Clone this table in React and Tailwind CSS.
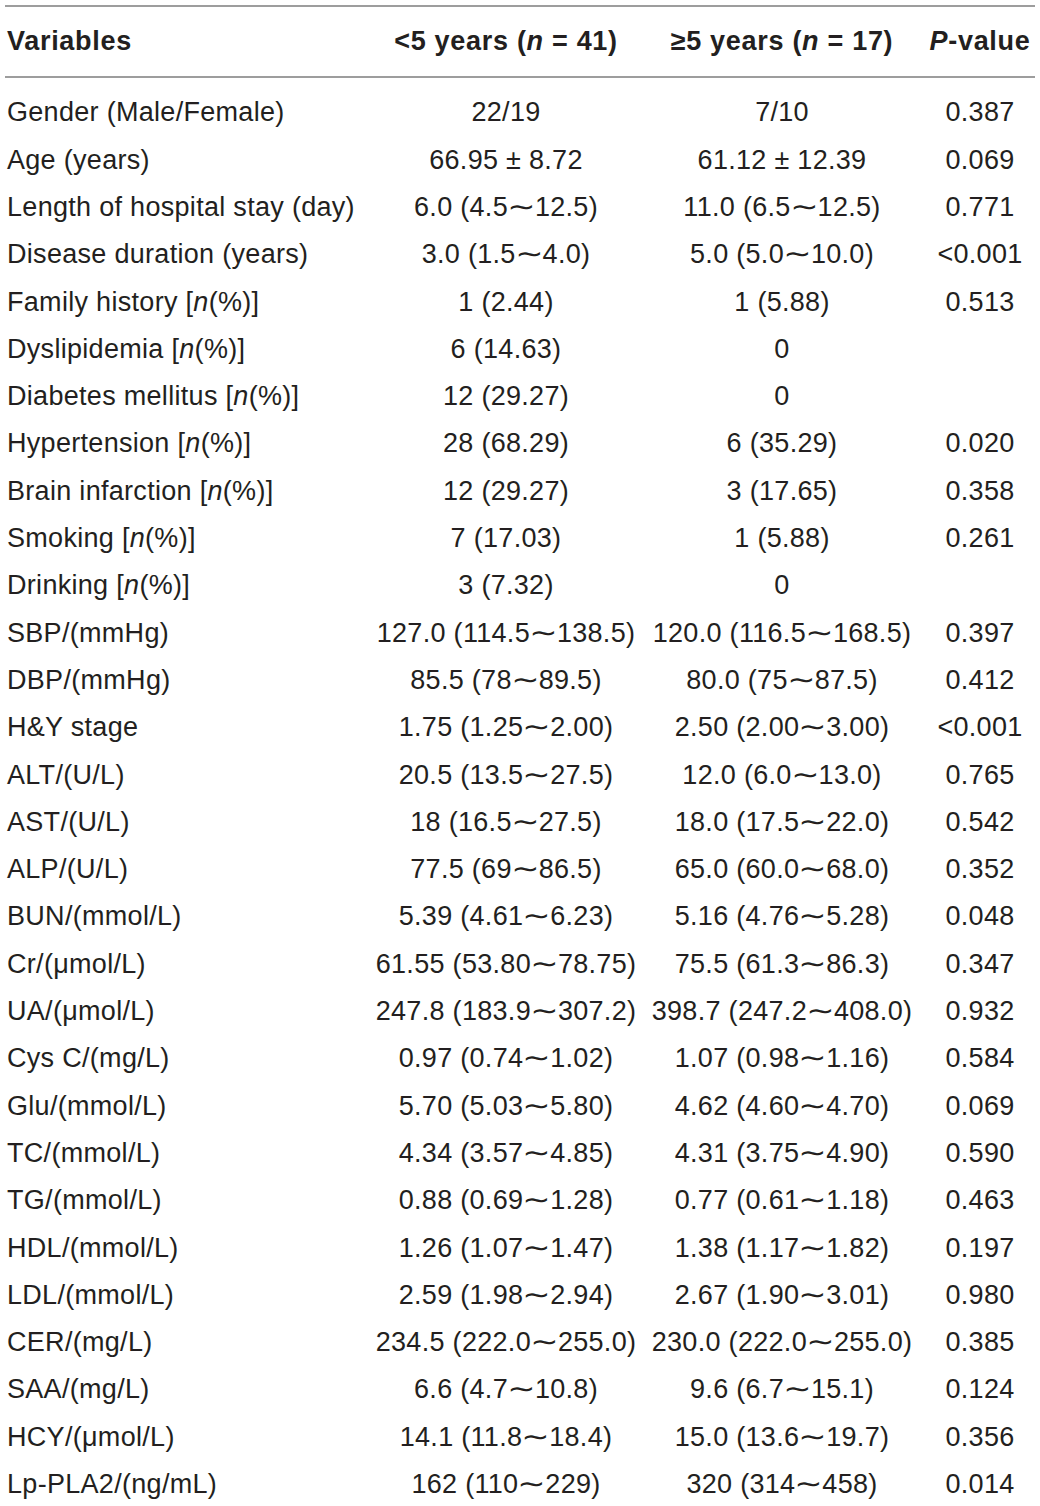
import React from "react";

const N = () => <i>n</i>;

const rows = [
  ["Gender (Male/Female)", "22/19", "7/10", "0.387"],
  ["Age (years)", "66.95 ± 8.72", "61.12 ± 12.39", "0.069"],
  ["Length of hospital stay (day)", "6.0 (4.5∼12.5)", "11.0 (6.5∼12.5)", "0.771"],
  ["Disease duration (years)", "3.0 (1.5∼4.0)", "5.0 (5.0∼10.0)", "<0.001"],
  [<>Family history [<N />(%)]</>, "1 (2.44)", "1 (5.88)", "0.513"],
  [<>Dyslipidemia [<N />(%)]</>, "6 (14.63)", "0", ""],
  [<>Diabetes mellitus [<N />(%)]</>, "12 (29.27)", "0", ""],
  [<>Hypertension [<N />(%)]</>, "28 (68.29)", "6 (35.29)", "0.020"],
  [<>Brain infarction [<N />(%)]</>, "12 (29.27)", "3 (17.65)", "0.358"],
  [<>Smoking [<N />(%)]</>, "7 (17.03)", "1 (5.88)", "0.261"],
  [<>Drinking [<N />(%)]</>, "3 (7.32)", "0", ""],
  ["SBP/(mmHg)", "127.0 (114.5∼138.5)", "120.0 (116.5∼168.5)", "0.397"],
  ["DBP/(mmHg)", "85.5 (78∼89.5)", "80.0 (75∼87.5)", "0.412"],
  ["H&Y stage", "1.75 (1.25∼2.00)", "2.50 (2.00∼3.00)", "<0.001"],
  ["ALT/(U/L)", "20.5 (13.5∼27.5)", "12.0 (6.0∼13.0)", "0.765"],
  ["AST/(U/L)", "18 (16.5∼27.5)", "18.0 (17.5∼22.0)", "0.542"],
  ["ALP/(U/L)", "77.5 (69∼86.5)", "65.0 (60.0∼68.0)", "0.352"],
  ["BUN/(mmol/L)", "5.39 (4.61∼6.23)", "5.16 (4.76∼5.28)", "0.048"],
  ["Cr/(μmol/L)", "61.55 (53.80∼78.75)", "75.5 (61.3∼86.3)", "0.347"],
  ["UA/(μmol/L)", "247.8 (183.9∼307.2)", "398.7 (247.2∼408.0)", "0.932"],
  ["Cys C/(mg/L)", "0.97 (0.74∼1.02)", "1.07 (0.98∼1.16)", "0.584"],
  ["Glu/(mmol/L)", "5.70 (5.03∼5.80)", "4.62 (4.60∼4.70)", "0.069"],
  ["TC/(mmol/L)", "4.34 (3.57∼4.85)", "4.31 (3.75∼4.90)", "0.590"],
  ["TG/(mmol/L)", "0.88 (0.69∼1.28)", "0.77 (0.61∼1.18)", "0.463"],
  ["HDL/(mmol/L)", "1.26 (1.07∼1.47)", "1.38 (1.17∼1.82)", "0.197"],
  ["LDL/(mmol/L)", "2.59 (1.98∼2.94)", "2.67 (1.90∼3.01)", "0.980"],
  ["CER/(mg/L)", "234.5 (222.0∼255.0)", "230.0 (222.0∼255.0)", "0.385"],
  ["SAA/(mg/L)", "6.6 (4.7∼10.8)", "9.6 (6.7∼15.1)", "0.124"],
  ["HCY/(μmol/L)", "14.1 (11.8∼18.4)", "15.0 (13.6∼19.7)", "0.356"],
  ["Lp-PLA2/(ng/mL)", "162 (110∼229)", "320 (314∼458)", "0.014"],
];

// wide tilde like the typeset original
const Val = ({ v }) => {
  const parts = v.split("∼");
  if (parts.length < 2) return v;
  return (
    <>
      {parts[0]}
      <span className="inline-block mx-[2px] scale-x-125">∼</span>
      {parts[1]}
    </>
  );
};

const cols = "grid grid-cols-[368px_276px_276px_120px] items-center";

export default function App() {
  return (
    <div className="w-[1040px] h-[1506px] overflow-hidden bg-white pt-[5px] text-[27px] tracking-[0.3px] text-[#231f20] font-['Liberation_Sans','DejaVu_Sans',sans-serif]">
      <div className="mx-[5px] h-[2px] bg-[#9d9d9d]" />
      <div className={`${cols} h-[69px] font-bold tracking-[0.7px]`}>
        <div className="pl-[7px]">Variables</div>
        <div className="text-center">&lt;5 years (<N /> = 41)</div>
        <div className="text-center">≥5 years (<N /> = 17)</div>
        <div className="text-center"><i>P</i>-value</div>
      </div>
      <div className="mx-[5px] h-[2px] bg-[#9d9d9d]" />
      <div className="pt-[11px]">
        {rows.map((r, i) => (
          <div key={i} className={`${cols} h-[47.3px] whitespace-nowrap`}>
            <div className="pl-[7px]">{r[0]}</div>
            <div className="text-center"><Val v={r[1]} /></div>
            <div className="text-center"><Val v={r[2]} /></div>
            <div className="text-center">{r[3]}</div>
          </div>
        ))}
      </div>
    </div>
  );
}
